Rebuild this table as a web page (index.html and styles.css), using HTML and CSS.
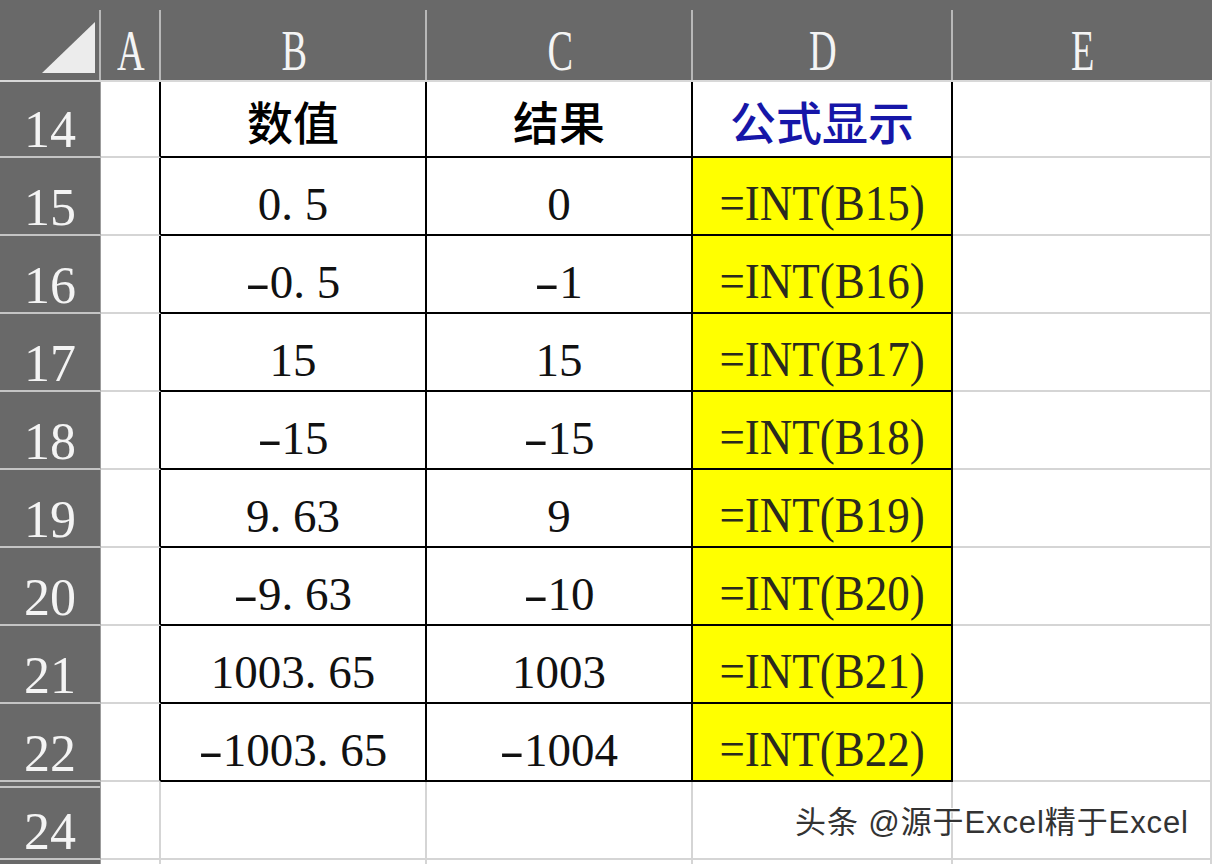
FILE: index.html
```html
<!DOCTYPE html>
<html lang="zh-CN">
<head>
<meta charset="utf-8">
<title>INT</title>
<link rel="stylesheet" href="styles.css">
</head>
<body>
<div class="sheet">
  <div class="ch corner"><svg class="tri" width="60" height="60" viewBox="0 0 60 60"><polygon points="2,53 55,53 55,2" fill="#ececec"/></svg></div>
  <div class="ch"><span class="lt">A</span></div>
  <div class="ch"><span class="lt">B</span></div>
  <div class="ch"><span class="lt">C</span></div>
  <div class="ch"><span class="lt">D</span></div>
  <div class="ch last"><span class="lt">E</span></div>

  <div class="rh">14</div>
  <div class="c bl"></div>
  <div class="c bl bb hd">数值</div>
  <div class="c bl bb hd">结果</div>
  <div class="c bl bb hd blue">公式显示</div>
  <div class="c"></div>

  <div class="rh">15</div>
  <div class="c bl"></div>
  <div class="c bl bb">0<span class="dot">.</span>5</div>
  <div class="c bl bb">0</div>
  <div class="c bl bb y"><span class="f">=INT(B15)</span></div>
  <div class="c"></div>

  <div class="rh">16</div>
  <div class="c bl"></div>
  <div class="c bl bb"><span class="neg">-</span>0<span class="dot">.</span>5</div>
  <div class="c bl bb"><span class="neg">-</span>1</div>
  <div class="c bl bb y"><span class="f">=INT(B16)</span></div>
  <div class="c"></div>

  <div class="rh">17</div>
  <div class="c bl"></div>
  <div class="c bl bb">15</div>
  <div class="c bl bb">15</div>
  <div class="c bl bb y"><span class="f">=INT(B17)</span></div>
  <div class="c"></div>

  <div class="rh">18</div>
  <div class="c bl"></div>
  <div class="c bl bb"><span class="neg">-</span>15</div>
  <div class="c bl bb"><span class="neg">-</span>15</div>
  <div class="c bl bb y"><span class="f">=INT(B18)</span></div>
  <div class="c"></div>

  <div class="rh">19</div>
  <div class="c bl"></div>
  <div class="c bl bb">9<span class="dot">.</span>63</div>
  <div class="c bl bb">9</div>
  <div class="c bl bb y"><span class="f">=INT(B19)</span></div>
  <div class="c"></div>

  <div class="rh">20</div>
  <div class="c bl"></div>
  <div class="c bl bb"><span class="neg">-</span>9<span class="dot">.</span>63</div>
  <div class="c bl bb"><span class="neg">-</span>10</div>
  <div class="c bl bb y"><span class="f">=INT(B20)</span></div>
  <div class="c"></div>

  <div class="rh">21</div>
  <div class="c bl"></div>
  <div class="c bl bb">1003<span class="dot">.</span>65</div>
  <div class="c bl bb">1003</div>
  <div class="c bl bb y"><span class="f">=INT(B21)</span></div>
  <div class="c"></div>

  <div class="rh">22</div>
  <div class="c bl"></div>
  <div class="c bl bb"><span class="neg">-</span>1003<span class="dot">.</span>65</div>
  <div class="c bl bb"><span class="neg">-</span>1004</div>
  <div class="c bl bb y"><span class="f">=INT(B22)</span></div>
  <div class="c"></div>

  <div class="rh r24">24</div>
  <div class="c"></div>
  <div class="c"></div>
  <div class="c"></div>
  <div class="c"></div>
  <div class="c"></div>

  <div class="rh tail"></div>
  <div class="c tailc"></div>
  <div class="c tailc"></div>
  <div class="c tailc"></div>
  <div class="c tailc"></div>
  <div class="c tailc"></div>

  <div class="wm">头条 @源于Excel精于Excel</div>
</div>
</body>
</html>
```

FILE: styles.css
```css
* { box-sizing: border-box; }
html, body { margin: 0; padding: 0; background: #fff; overflow: hidden; }

.sheet {
  position: relative;
  width: 1212px;
  height: 864px;
  display: grid;
  grid-template-columns: 101px 60px 266px 266px 260px 1fr;
  grid-template-rows: 82px 76px repeat(8, 78px) 78px 1fr;
  background: #fff;
}

.ch {
  background: linear-gradient(#b8b8b8, #b8b8b8) right bottom / 2px 70px no-repeat, #696969;
  border-bottom: 2px solid #d8d8d8;
  display: flex;
  align-items: flex-end;
  justify-content: center;
  color: #f4f4f4;
  font: 58px/1 "Liberation Serif", serif;
}
.ch.last { background: #696969; }
.lt { display: inline-block; transform: scaleX(0.66); }

.corner { justify-content: flex-start; align-items: flex-start; padding: 20px 0 0 40px; }
.tri { display: block; }

.rh {
  background: #696969;
  border-bottom: 2px solid #c4c4c4;
  border-right: 1px solid #9c9c9c;
  display: flex;
  align-items: flex-end;
  justify-content: center;
  color: #f4f4f4;
  font: 52px/1 "Liberation Serif", serif;
}
.r24 { background: linear-gradient(to bottom, #696969 0 4px, #c4c4c4 4px 6px, #696969 6px); }
.tail { border-bottom: none; }

.c {
  border-right: 2px solid #d5d5d5;
  border-bottom: 2px solid #d5d5d5;
  display: flex;
  align-items: flex-end;
  justify-content: center;
  padding-bottom: 6px;
  color: #111;
  font: 47px/1 "Liberation Serif", serif;
  white-space: nowrap;
}
.c.tailc { border-bottom: none; }
.c.bl { border-right-color: #000; }
.c.bb { border-bottom-color: #000; }

.hd {
  font-family: "Noto Sans CJK SC", sans-serif;
  font-weight: 500;
  font-size: 46px;
  align-items: center;
  padding-bottom: 0;
  padding-top: 2px;
  color: #000;
}
.blue { color: #1616a8; }

.y { background: #ffff00; color: #2a2a1e; }
.f { display: inline-block; font-size: 50px; transform: scaleX(0.9); }

.dot { margin-right: 0.25em; }
.neg { display: inline-block; transform: scaleX(1.6); margin: 0 0.09em; }

.wm {
  position: absolute;
  left: 795px;
  top: 804px;
  font: 31px/1.2 "Liberation Sans", "Noto Sans CJK SC", sans-serif;
  letter-spacing: 0.9px;
  color: #333;
  white-space: nowrap;
  text-shadow: 0 0 2px #fff, 1px 1px 0 #fff, -1px -1px 0 #fff;
}
```
